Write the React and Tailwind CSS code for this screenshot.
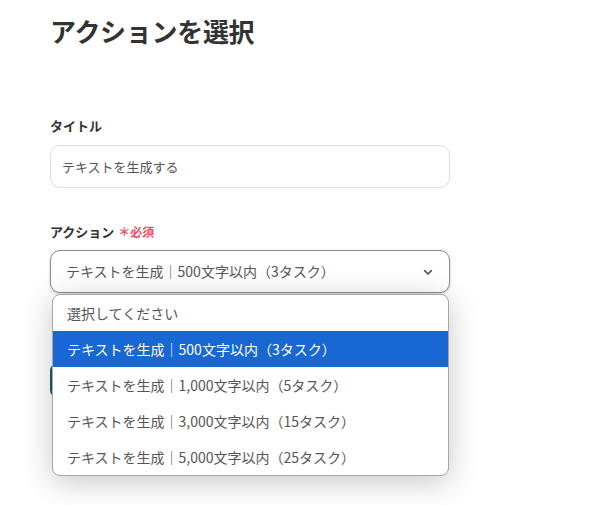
import React, { useState } from "react";

const OPTIONS = [
  "テキストを生成｜500文字以内（3タスク）",
  "テキストを生成｜1,000文字以内（5タスク）",
  "テキストを生成｜3,000文字以内（15タスク）",
  "テキストを生成｜5,000文字以内（25タスク）",
];

const ChevronDown = () => (
  <svg className="w-4 h-4 text-[#555]" fill="none" stroke="currentColor" viewBox="0 0 24 24">
    <path strokeLinecap="round" strokeLinejoin="round" strokeWidth={2.5} d="M7 10l5 5 5-5" />
  </svg>
);

const App = () => {
  const [title, setTitle] = useState("テキストを生成する");
  const [selected, setSelected] = useState(0);

  return (
    <div
      className="min-h-[505px] w-full bg-white text-[#333] overflow-hidden"
      style={{ fontFamily: '"Noto Sans CJK JP", "Noto Sans", sans-serif' }}
    >
      <div className="w-[400px] ml-[50px] pt-[12px]">
        <h1 className="text-[26px] font-bold leading-[38px] tracking-[-0.3px]">アクションを選択</h1>

        {/* TITLE */}
        <div className="mt-[66px]">
          <label className="block text-[13px] font-bold leading-[20px]">タイトル</label>
          <input
            type="text"
            value={title}
            onChange={(e) => setTitle(e.target.value)}
            className="mt-[9px] w-full h-[43px] px-[11px] bg-white border border-[#dcdfe4] rounded-[10px] text-[13px] text-[#555] focus:outline-none"
          />
        </div>

        {/* ACTION SELECT */}
        <div className="mt-[34px] relative">
          <label className="flex items-center gap-1 text-[13px] font-bold leading-[20px]">
            アクション
            <span className="text-[12px] text-[#ee4b63] font-bold">＊必須</span>
          </label>
          <div className="mt-[8px] w-full h-[43px] pl-[15px] pr-[13px] flex items-center justify-between border border-[#8c8c8c] rounded-[10px] shadow-[0_1px_3px_rgba(0,0,0,0.2)] bg-white">
            <span className="text-[14px] text-[#555]">{OPTIONS[selected]}</span>
            <ChevronDown />
          </div>

          {/* submit button, mostly covered by the open list */}
          <button className="mt-[70px] h-[35px] w-[160px] rounded-[8px] bg-[#1b5d6e]" aria-label="追加" />

          {/* OPTION LIST */}
          <div className="absolute left-[2px] right-[1px] top-[72px] bg-white border border-[#a8a8a8] rounded-[8px] overflow-hidden shadow-[0_6px_30px_rgba(0,0,0,0.22)] text-[14px]">
            <div className="h-[36px] px-[14px] flex items-center text-[#555]">選択してください</div>
            {OPTIONS.map((opt, i) => (
              <div
                key={opt}
                onClick={() => setSelected(i)}
                className={
                  i === selected
                    ? "h-[36px] px-[14px] flex items-center bg-[#1967d2] text-white"
                    : "h-[36px] px-[14px] flex items-center text-[#555]"
                }
              >
                {opt}
              </div>
            ))}
          </div>
        </div>
      </div>
    </div>
  );
};

export default App;
